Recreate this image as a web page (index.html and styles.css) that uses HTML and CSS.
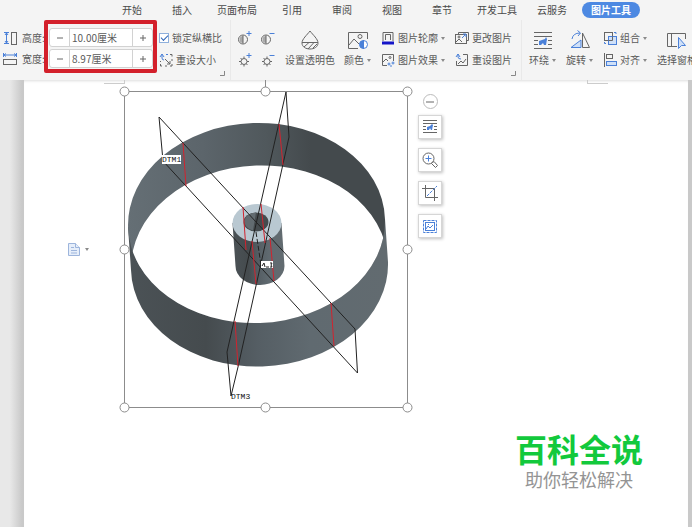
FILE: index.html
```html
<!DOCTYPE html>
<html lang="zh-CN">
<head>
    <meta charset="UTF-8">
    <meta name="viewport" content="width=device-width, initial-scale=1.0">
    <title>图片工具</title>
    <link rel="stylesheet" href="styles.css">
</head>
<body>
    <header class="ribbon">
        <nav class="tabs">
            <a href="#" class="tab">开始</a>
            <a href="#" class="tab">插入</a>
            <a href="#" class="tab">页面布局</a>
            <a href="#" class="tab">引用</a>
            <a href="#" class="tab">审阅</a>
            <a href="#" class="tab">视图</a>
            <a href="#" class="tab">章节</a>
            <a href="#" class="tab">开发工具</a>
            <a href="#" class="tab">云服务</a>
            <a href="#" class="tab active">图片工具</a>
        </nav>

        <div class="panel">
            <div class="group size-group">
                <div class="size-labels">
                    <label for="height">
                        <svg class="icon" viewBox="0 0 14 14"><path class="blue" d="M1 1.500h5M1 12.500h5M3.500 2v10M2 4l1.500-2L5 4M2 10l1.500 2L5 10"/><rect x="8.500" y="1.500" width="5" height="12"/></svg>
                        高度:
                    </label>
                    <label for="width">
                        <svg class="icon" viewBox="0 0 14 14"><path class="blue" d="M.5 1v4M13.500 1v4M1 3h12M3 1.500L1 3l2 1.500M11 1.500L13 3l-2 1.500"/><rect x=".5" y="7.500" width="13" height="5"/></svg>
                        宽度:
                    </label>
                </div>
                <div class="size-box">
                    <div class="spinner">
                        <button type="button" aria-label="减小高度"><svg viewBox="0 0 8 8"><path d="M1 4h6"/></svg></button>
                        <input type="text" id="height" value="10.00厘米">
                        <button type="button" aria-label="增大高度"><svg viewBox="0 0 8 8"><path d="M1 4h6M4 1v6"/></svg></button>
                    </div>
                    <div class="spinner">
                        <button type="button" aria-label="减小宽度"><svg viewBox="0 0 8 8"><path d="M1 4h6"/></svg></button>
                        <input type="text" id="width" value="8.97厘米">
                        <button type="button" aria-label="增大宽度"><svg viewBox="0 0 8 8"><path d="M1 4h6M4 1v6"/></svg></button>
                    </div>
                </div>
                <div class="stack">
                    <label class="tool"><input type="checkbox" class="check" checked>锁定纵横比</label>
                    <button type="button" class="tool">
                        <svg class="icon" viewBox="0 0 14 14"><path class="blue" d="M1 4l2-3 2 3M3 1v4q0 2 2 2M7 1.500h2"/><path d="M11 1.500h2v2M13 6v2M13 11v2h-2M8 13H6M3 13H1.500v-2M1.500 9V8M6 6l5 5M11 8v3H8"/></svg>
                        重设大小
                    </button>
                </div>
                <svg class="launcher" viewBox="0 0 5 5"><path d="M4.500 0v4.500H0"/></svg>
            </div>

            <div class="group">
                <div class="adjust">
                    <button type="button" aria-label="增加对比度"><svg class="icon" viewBox="0 0 14 14"><circle cx="5" cy="8.500" r="4.500"/><path class="shade" d="M5 5a3.500 3.500 0 0 0 0 7z"/><path d="M5 4.500v8"/><path class="blue" d="M8.500 2.500h5M11 0v5"/></svg></button>
                    <button type="button" aria-label="降低对比度"><svg class="icon" viewBox="0 0 14 14"><circle cx="5" cy="8.500" r="4.500"/><path class="shade" d="M5 5a3.500 3.500 0 0 0 0 7z"/><path d="M5 4.500v8"/><path class="blue" d="M8.500 2.500h5"/></svg></button>
                    <button type="button" aria-label="增加亮度"><svg class="icon" viewBox="0 0 14 14"><circle cx="6" cy="8.500" r="3"/><path d="M6 3.500v2M6 11.500v2M1 8.500h2M9 8.500h2M2.500 5l1.500 1.500M8 10.500L9.500 12M2.500 12L4 10.500"/><path class="blue" d="M8.500 2.500h5M11 0v5"/></svg></button>
                    <button type="button" aria-label="降低亮度"><svg class="icon" viewBox="0 0 14 14"><circle cx="6" cy="8.500" r="3"/><path d="M6 3.500v2M6 11.500v2M1 8.500h2M9 8.500h2M2.500 5l1.500 1.500M8 10.500L9.500 12M2.500 12L4 10.500"/><path class="blue" d="M8.500 2.500h5"/></svg></button>
                </div>
                <button type="button" class="big-tool">
                    <svg class="icon-big" viewBox="0 0 20 20"><path d="M10 1C7 5 2 9 2 13c0 4 4 6 8 6s8-2 8-6c0-4-5-8-8-12z"/><path d="M2 12.500h16M4 17l5-4.500M8 19l6-6.500M13 18l4-4"/></svg>
                    <span>设置透明色</span>
                </button>
                <button type="button" class="big-tool">
                    <svg class="icon-big" viewBox="0 0 20 20"><path d="M10 18.500H.5v-16h19V9"/><circle cx="12" cy="6.500" r="2"/><path d="M1 15l5-6 5 5"/><circle class="blue cover" cx="15.500" cy="14.500" r="4"/><path class="blue-fill" d="M15.500 10.500a4 4 0 0 0 0 8z"/><path class="blue" d="M15.500 10v9"/></svg>
                    <span>颜色<i class="caret"></i></span>
                </button>
                <div class="stack">
                    <button type="button" class="tool">
                        <svg class="icon" viewBox="0 0 14 14"><path d="M2 10V1.500h10V10M4.500 9V3.500h5V9"/><path class="bar" d="M1 12h12"/></svg>
                        图片轮廓<i class="caret"></i>
                    </button>
                    <button type="button" class="tool">
                        <svg class="icon" viewBox="0 0 14 14"><path d="M6 12.500H1.500v-11h11V8M2 9l3-3 2 2"/><circle cx="9" cy="4.500" r="1"/><path class="blue" d="M8 9.500v3M6.500 11h3M12 8.500v3M10.500 10h3M10 12v2"/></svg>
                        图片效果<i class="caret"></i>
                    </button>
                </div>
                <div class="stack">
                    <button type="button" class="tool">
                        <svg class="icon" viewBox="0 0 14 14"><path d="M3.500 3.500V1.500h10v8h-2"/><rect x=".5" y="3.500" width="11" height="9"/><path d="M1 11l3-3 3 3"/><circle cx="4" cy="6" r="1"/><path class="blue" d="M7 7l4-4M8 3h3v3"/></svg>
                        更改图片
                    </button>
                    <button type="button" class="tool">
                        <svg class="icon" viewBox="0 0 14 14"><path d="M8 1.500h4.500v11h-11V8M3 11l3-3 2 2 3-4"/><path class="blue" d="M1 4l2-3 2 3M3 1v3q0 2 3 2"/></svg>
                        重设图片
                    </button>
                </div>
                <svg class="launcher" viewBox="0 0 5 5"><path d="M4.500 0v4.500H0"/></svg>
            </div>

            <div class="group">
                <button type="button" class="big-tool">
                    <svg class="icon-big" viewBox="0 0 20 20"><path d="M1 2.500h18M1 6.500h18M1 10.500h4M15 10.500h4M1 14.500h4M15 14.500h4M1 18.500h18"/><path class="blue-fill" d="M6 15v-4l3-1 3-1 1-2 1 2-1 6h-2l-1-2-2 2z"/></svg>
                    <span>环绕<i class="caret"></i></span>
                </button>
                <button type="button" class="big-tool">
                    <svg class="icon-big" viewBox="0 0 20 20"><path class="blue light" d="M1 17.500L11 10v7.500z"/><path d="M12.500 3v14.500h7z"/><path class="blue" d="M2 9q1-6 8-6M7.500.5L10.500 3 8 6"/></svg>
                    <span>旋转<i class="caret"></i></span>
                </button>
                <div class="stack">
                    <button type="button" class="tool">
                        <svg class="icon" viewBox="0 0 14 14"><rect x="1.500" y="1.500" width="8" height="8"/><rect class="blue light" x="5.500" y="5.500" width="8" height="8"/><path class="blue" d="M3 12.500H1.500V11M11 1.500h2V3"/><path d="M5.500 9.500h4v-4"/></svg>
                        组合<i class="caret"></i>
                    </button>
                    <button type="button" class="tool">
                        <svg class="icon" viewBox="0 0 14 14"><path d="M1.500 0v14"/><rect x="3.500" y="1.500" width="6" height="4"/><rect class="blue light" x="3.500" y="8.500" width="10" height="4"/></svg>
                        对齐<i class="caret"></i>
                    </button>
                </div>
                <button type="button" class="big-tool">
                    <svg class="icon-big" viewBox="0 0 20 20"><path d="M10 16.500H.5v-13h18V9M4.500 3.500v13"/><path class="blue light" d="M11.500 7.500v11l3-3h4z"/></svg>
                    <span>选择窗格</span>
                </button>
            </div>
        </div>
    </header>

    <main class="workspace">
        <div class="paper">
            <div class="crop-marks">
                <span class="mark mark-left"></span>
                <span class="mark mark-right"></span>
            </div>

            <div class="content">
                <button type="button" class="paragraph" aria-label="段落布局">
                    <svg viewBox="0 0 12 13"><path d="M.5.5h7l4 4v8H.5z"/><path d="M7.500.5v4h4M3 4.500h3M3 7.500h6M3 10h6"/></svg>
                    <i class="caret"></i>
                </button>

                <svg class="picture" viewBox="124 91 284 316">
                    <defs>
                        <linearGradient id="back">
                            <stop offset="0" stop-color="#656f75"/>
                            <stop offset=".3" stop-color="#5c656b"/>
                            <stop offset=".55" stop-color="#50585c"/>
                            <stop offset=".72" stop-color="#444a4d"/>
                            <stop offset="1" stop-color="#444a4d"/>
                        </linearGradient>
                        <linearGradient id="front">
                            <stop offset="0" stop-color="#4b5256"/>
                            <stop offset=".3" stop-color="#454b4e"/>
                            <stop offset=".5" stop-color="#555e64"/>
                            <stop offset=".7" stop-color="#606a70"/>
                            <stop offset="1" stop-color="#626b70"/>
                        </linearGradient>
                        <clipPath id="topRim">
                            <ellipse cx="256.500" cy="223" rx="128.500" ry="100" transform="rotate(-2 256.500 223)"/>
                        </clipPath>
                    </defs>

                    <!-- ring -->
                    <g class="solid">
                        <path fill="url(#front)" d="M128 227L131 270A128.500 100.500 -2 0 0 388 262L385 219z"/>
                        <ellipse fill="url(#back)" cx="256.500" cy="223" rx="128.500" ry="100" transform="rotate(-2 256.500 223)"/>
                        <g clip-path="url(#topRim)">
                            <ellipse fill="#fff" cx="259.500" cy="266" rx="128.500" ry="100.500" transform="rotate(-2 259.500 266)"/>
                        </g>
                    </g>

                    <!-- hub -->
                    <g class="solid">
                        <path fill="url(#front)" d="M232.500 223l3 43a24.500 19 0 0 0 49 0l-3-43z"/>
                        <ellipse fill="#b9c8d1" cx="257" cy="223" rx="24.500" ry="19"/>
                        <ellipse fill="#454b4e" cx="256" cy="222" rx="12.500" ry="9.500"/>
                        <path fill="#626b70" d="M244 221q2-8 12-8.500l-3 18q-8-2-9-9.500z"/>
                    </g>

                    <!-- datum planes -->
                    <path class="datum" d="M159 117L355 329L357.500 373L163 161z"/>
                    <path class="datum" d="M286 92L289 137L238 367L231 396L227 352z"/>
                    <path class="datum" stroke-dasharray="5 2" d="M256 232L261 265"/>
                    <path class="edge" d="M183 143L186 186M279 124L283 165M331 303L334 346M235 321L238 366"/>
                    <path class="edge" d="M243 207L246 250M261 204L265 243M252 241L256 284M270 238L274 281"/>

                    <rect class="solid" x="162" y="155" width="19" height="9" fill="#fff"/>
                    <text class="datum-name" x="162" y="162">DTM1</text>
                    <text class="datum-name" x="231" y="399">DTM3</text>
                    <rect class="solid" x="261" y="261" width="12" height="7" fill="#fff"/>
                    <path class="datum" d="M262 266l2-3 1 4M266 267h3M270 263h2l-1 2 1 2h-2"/>

                    <!-- selection frame -->
                    <rect class="frame" x="124.500" y="91.500" width="283" height="316"/>
                    <path class="frame" d="M265.500 80v8"/>
                    <g class="handles">
                        <circle cx="124.500" cy="91.500" r="4.500"/>
                        <circle cx="265.500" cy="91.500" r="4.500"/>
                        <circle cx="407.500" cy="91.500" r="4.500"/>
                        <circle cx="124.500" cy="249.500" r="4.500"/>
                        <circle cx="407.500" cy="249.500" r="4.500"/>
                        <circle cx="124.500" cy="407.500" r="4.500"/>
                        <circle cx="265.500" cy="407.500" r="4.500"/>
                        <circle cx="407.500" cy="407.500" r="4.500"/>
                    </g>
                </svg>

                <div class="side-tools">
                    <button type="button" class="collapse" aria-label="收起"><svg viewBox="0 0 8 8"><path d="M0 4h8"/></svg></button>
                    <button type="button" class="side-button" aria-label="布局选项"><svg viewBox="0 0 16 16"><path d="M1 1.500h14M1 4.500h14M1 7.500h3M12 7.500h3M1 10.500h3M12 10.500h3M1 13.500h14"/><path class="blue-fill" d="M5 11V8l3-1 2-2 1 1-1 5H9L8 9l-1 2z"/></svg></button>
                    <button type="button" class="side-button" aria-label="放大"><svg viewBox="0 0 16 16"><circle cx="6.500" cy="6.500" r="5.500"/><path d="M10.500 10.500l1.500-1 3.500 4-2 2-4-4z"/><path class="blue" d="M3.500 6.500h6M6.500 3.500v6"/></svg></button>
                    <button type="button" class="side-button" aria-label="裁剪"><svg viewBox="0 0 16 16"><path d="M3.500 0v12.500H16M0 3.500h12.500V16"/><path class="blue" stroke-dasharray="3 1" d="M5 11l10-10"/></svg></button>
                    <button type="button" class="side-button" aria-label="图片选项"><svg viewBox="0 0 16 16"><rect class="blue" stroke-dasharray="3 1" x="1.500" y="2.500" width="13" height="12"/><rect class="blue" x="3.500" y="4.500" width="9" height="8"/><path class="blue" d="M4 11l2-3 2 2 3-3M6 6.500h1"/></svg></button>
                </div>
            </div>

            <div class="brand">
                <div class="brand-name">百科全说</div>
                <div class="brand-slogan">助你轻松解决</div>
            </div>
        </div>
    </main>
</body>
</html>
```
FILE: styles.css
```css
* {
    margin: 0;
    padding: 0;
    box-sizing: border-box;
    font-family: "Noto Sans CJK SC", sans-serif;
}

body {
    min-height: 100vh;
    display: flex;
    flex-direction: column;
    overflow: hidden;
    background-color: #e8e8e8;
    color: #5a5a5a;
    font-size: 10px;
    line-height: 14px;
}

button {
    border: none;
    background: none;
    color: inherit;
    font-size: 10px;
    line-height: 14px;
    white-space: nowrap;
    cursor: pointer;
}

svg {
    display: block;
    flex-shrink: 0;
    fill: none;
    stroke: #666;
}

/* Ribbon */
.ribbon {
    height: 80px;
    background-color: #f4f4f4;
}

.tabs {
    display: flex;
    align-items: center;
    height: 20px;
    padding-left: 107px;
}

.tab {
    min-width: 50px;
    padding: 0 10px;
    color: #4a4a4a;
    text-align: center;
    text-decoration: none;
    white-space: nowrap;
}

.tab.active {
    margin-left: 5px;
    padding: 1px 9px;
    border-radius: 8px;
    background-color: #4d89e2;
    color: #fff;
    font-weight: bold;
}

.panel {
    display: flex;
    height: 60px;
}

.group {
    position: relative;
    display: flex;
    flex-shrink: 0;
    align-items: flex-start;
    gap: 9px;
    padding: 7px 9px 0 7px;
}

.group + .group {
    border-left: 1px solid #e9e9e9;
}

.size-group {
    gap: 0;
    padding: 0 8px 0 3px;
}

.size-labels {
    width: 41px;
    margin-top: 7px;
    overflow: hidden;
}

.size-labels label {
    display: flex;
    align-items: center;
    gap: 5px;
    height: 21px;
    white-space: nowrap;
}

.size-box {
    display: flex;
    flex-direction: column;
    gap: 2px;
    padding: 4px 0 1px 1px;
    border: 4px solid #d3202b;
    border-radius: 2px;
}

.spinner {
    display: flex;
    width: 104px;
    height: 19px;
    border: 1px solid #d2d2d2;
    border-radius: 3px;
    background-color: #fff;
}

.spinner button {
    display: flex;
    align-items: center;
    justify-content: center;
    width: 19px;
}

.spinner button svg {
    width: 8px;
    height: 8px;
}

.spinner input {
    flex: 1;
    min-width: 0;
    padding-left: 2px;
    border: 1px solid #d2d2d2;
    border-width: 0 1px;
    color: #5a5a5a;
    font-size: 10px;
}

.stack {
    display: flex;
    flex-direction: column;
}

.size-group .stack {
    margin: 7px 0 0 2px;
}

.tool {
    display: flex;
    align-items: center;
    gap: 3px;
    height: 22px;
    white-space: nowrap;
}

.check {
    appearance: none;
    width: 10px;
    height: 10px;
    border: 1px solid #8fb0dc;
    background-color: #fff;
}

.check:checked::before {
    content: "";
    display: block;
    width: 6px;
    height: 3px;
    margin: 1px;
    border-left: 1px solid #2f66b8;
    border-bottom: 1px solid #2f66b8;
    transform: rotate(-45deg);
}

.icon {
    width: 14px;
    height: 14px;
}

.icon-big {
    width: 20px;
    height: 20px;
}

.adjust {
    display: grid;
    grid-template-columns: 15px 15px;
    grid-auto-rows: 22px;
    column-gap: 8px;
    align-items: center;
}

.big-tool {
    display: flex;
    flex-direction: column;
    align-items: center;
    gap: 3px;
    padding-top: 3px;
}

.big-tool span {
    display: flex;
    align-items: center;
    gap: 3px;
}

.caret {
    margin-right: 1px;
    border: 2px solid transparent;
    border-top: 3px solid #8a8a8a;
    border-bottom: none;
}

.launcher {
    position: absolute;
    right: 5px;
    bottom: 4px;
    width: 5px;
    height: 5px;
    stroke: #888;
}

.blue {
    stroke: #4a80d8;
}

.blue-fill {
    fill: #4a80d8;
    stroke: none;
}

.light {
    fill: #cfe0f8;
}

.cover {
    fill: #fff;
}

.shade {
    fill: #aaa;
    stroke: none;
}

.bar {
    stroke: #1414c8;
    stroke-width: 3;
}

/* Document */
.workspace {
    flex: 1;
    padding: 0 4px 0 24px;
    background: linear-gradient(to right, #e8e8e8 10px, #c9c9c9 22px);
}

.paper {
    display: flex;
    flex-direction: column;
    min-height: calc(100vh - 80px);
    background-color: #fff;
    box-shadow: inset 0 3px 3px -2px #ddd;
}

.crop-marks {
    display: flex;
    justify-content: space-between;
    padding: 0 80px;
}

.mark {
    width: 21px;
    height: 4px;
    border-bottom: 1px solid #ccc;
}

.mark-left {
    border-right: 1px solid #ccc;
}

.mark-right {
    border-left: 1px solid #ccc;
}

.content {
    display: flex;
    align-items: flex-start;
    padding: 7px 0 0 44px;
}

.paragraph {
    display: flex;
    align-self: center;
    align-items: center;
    gap: 5px;
    width: 56px;
}

.paragraph svg {
    width: 12px;
    height: 13px;
    fill: #e6eefa;
    stroke: #9db5dc;
}

.picture {
    width: 284px;
    height: 316px;
    overflow: visible;
}

.solid {
    stroke: none;
}

.datum {
    stroke: #222;
    stroke-width: 1;
}

.edge {
    stroke: #d2232e;
}

.datum-name {
    fill: #111;
    stroke: none;
    font-family: "Liberation Mono", monospace;
    font-size: 8px;
}

.frame {
    stroke: #8c8c8c;
}

.handles {
    fill: #fff;
    stroke: #8c8c8c;
}

.side-tools {
    display: flex;
    flex-direction: column;
    align-items: center;
    gap: 9px;
    padding: 3px 0 0 10px;
}

.collapse {
    display: flex;
    align-items: center;
    justify-content: center;
    width: 15px;
    height: 15px;
    margin-bottom: -3px;
    border: 1px solid #bbb;
    border-radius: 50%;
}

.collapse svg {
    width: 8px;
    height: 8px;
}

.side-button {
    display: flex;
    align-items: center;
    justify-content: center;
    width: 24px;
    height: 24px;
    border: 1px solid #d6d6d6;
    background-color: #fff;
    box-shadow: 1px 1px 3px rgba(0, 0, 0, 0.25);
}

.side-button svg {
    width: 16px;
    height: 16px;
}

.brand {
    align-self: flex-end;
    margin: 25px 45px 0 0;
    text-align: center;
}

.brand-name,
.brand-slogan {
    font-family: "Liberation Sans", "Noto Sans CJK SC", sans-serif;
}

.brand-name {
    color: #12c93c;
    font-size: 32px;
    font-weight: bold;
    line-height: 38px;
}

.brand-slogan {
    color: #949494;
    font-size: 18px;
    line-height: 22px;
}
```
